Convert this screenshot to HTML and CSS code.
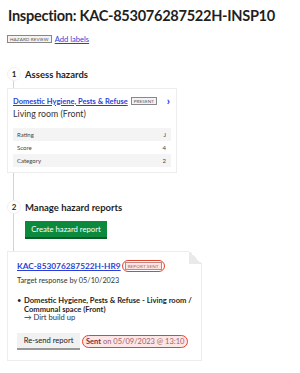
FILE: index.html
```html
<!DOCTYPE html>
<html lang="en">
<head>
    <meta charset="UTF-8">
    <meta name="viewport" content="width=device-width, initial-scale=1.0">
    <title>Inspection</title>
    <link rel="stylesheet" href="styles.css">
</head>
<body>
    <h1 class="title">Inspection: KAC-853076287522H-INSP10</h1>
    <div class="labels">
        <span class="tag">HAZARD REVIEW</span>
        <a href="#" class="link">Add labels</a>
    </div>

    <div class="steps">
        <div class="step">
            <div class="step-head">
                <span class="step-num">1</span>
                <h2>Assess hazards</h2>
            </div>
            <div class="card hazard-card">
                <div class="card-top">
                    <a href="#" class="card-link">Domestic Hygiene, Pests &amp; Refuse</a>
                    <span class="tag">PRESENT</span>
                    <span class="chevron">&rsaquo;</span>
                </div>
                <div class="location">Living room (Front)</div>
                <div class="stats">
                    <div class="stat-row shaded"><span>Rating</span><span>J</span></div>
                    <div class="stat-row"><span>Score</span><span>4</span></div>
                    <div class="stat-row shaded"><span>Category</span><span>2</span></div>
                </div>
            </div>
        </div>

        <div class="step">
            <div class="step-head">
                <span class="step-num">2</span>
                <h2>Manage hazard reports</h2>
            </div>
            <button class="create-btn">Create hazard report</button>
            <div class="card report-card">
                <span class="fold"></span>
                <div class="report-top">
                    <a href="#" class="report-link">KAC-853076287522H-HR9</a>
                    <span class="highlight"><span class="tag tag-sent">REPORT SENT</span></span>
                </div>
                <div class="target">Target response by 05/10/2023</div>
                <ul class="hazards">
                    <li>
                        <strong>Domestic Hygiene, Pests &amp; Refuse - Living room / Communal space (Front)</strong>
                        <div class="deficiency">&rarr; Dirt build up</div>
                    </li>
                </ul>
                <div class="report-actions">
                    <button class="resend-btn">Re-send report</button>
                    <span class="sent"><b>Sent</b> on 05/09/2023 @ 13:10</span>
                </div>
            </div>
        </div>
    </div>
</body>
</html>
```

FILE: styles.css
```css
* {
    margin: 0;
    padding: 0;
    box-sizing: border-box;
}

body {
    font-family: Lato, 'Noto Sans', sans-serif;
    color: #1f1f1f;
    background: white;
    padding: 6px 7px 0;
    font-size: 8px;
    overflow: hidden;
}

.title {
    font-size: 14.6px;
    font-weight: 700;
    line-height: 20px;
    letter-spacing: -0.3px;
    white-space: nowrap;
    padding-left: 1px;
}

.labels {
    display: flex;
    align-items: center;
    gap: 3px;
    margin-top: 8px;
    height: 9px;
}

.tag {
    display: inline-block;
    border: 1px solid #888;
    background: #f3f3f3;
    color: #555;
    font-size: 4.6px;
    line-height: 6px;
    padding: 0 2px;
    letter-spacing: 0.1px;
    white-space: nowrap;
}

.link {
    color: #2b3fd6;
    font-size: 7.6px;
}

.steps {
    margin-top: 24px;
    position: relative;
}

.steps::before {
    content: '';
    position: absolute;
    left: 6px;
    top: 10px;
    bottom: -40px;
    width: 1px;
    background: #d4d4d4;
}

.step {
    position: relative;
}

.step + .step {
    margin-top: 27px;
}

.step-head {
    display: flex;
    align-items: center;
    gap: 4px;
    height: 14px;
    margin-bottom: 7px;
}

.step-num {
    width: 14px;
    height: 14px;
    border-radius: 50%;
    background: white;
    border: 1px solid #f0f0f0;
    display: flex;
    align-items: center;
    justify-content: center;
    font-size: 8px;
    font-weight: 700;
    position: relative;
}

h2 {
    font-size: 9.5px;
    font-weight: 700;
}

.card {
    position: relative;
    background: white;
    border: 1px solid #ededed;
}

.hazard-card {
    width: 170px;
    padding: 7px 5px 5px;
}

.card-top {
    display: flex;
    align-items: center;
    gap: 3px;
    height: 10px;
}

.card-link {
    color: #2b3fd6;
    font-weight: 700;
    font-size: 7.5px;
}

.chevron {
    margin-left: auto;
    margin-right: 1px;
    color: #2b3fd6;
    font-weight: 900;
    font-size: 11px;
    line-height: 8px;
}

.location {
    margin-top: 3px;
    font-size: 8.8px;
    line-height: 10px;
    color: #333;
}

.stats {
    margin-top: 9px;
}

.stat-row {
    display: flex;
    justify-content: space-between;
    padding: 0 5px 0 4px;
    height: 13px;
    align-items: center;
    font-size: 6px;
    color: #444;
}

.stat-row.shaded {
    background: #f4f4f4;
}

.create-btn {
    margin-left: 18px;
    background: #0b8a3e;
    color: white;
    border: none;
    font-family: inherit;
    font-size: 7.7px;
    width: 82px;
    height: 18px;
    border-bottom: 2px solid #075c29;
}

.report-card {
    width: 195px;
    margin-top: 12px;
    padding: 8px 6px 10px 9px;
}

.fold {
    position: absolute;
    top: -1px;
    right: -1px;
    width: 13px;
    height: 13px;
    background: linear-gradient(225deg, white 50%, #eaeaea 50%);
}

.report-top {
    display: flex;
    align-items: center;
    gap: 1px;
    height: 12px;
}

.report-link {
    color: #2b3fd6;
    font-weight: 700;
    font-size: 8.3px;
}

.highlight {
    border: 1.5px solid #e8412c;
    border-radius: 8px;
    padding: 1px 2px;
    display: inline-flex;
}

.tag-sent {
    background: #fbe3e3;
    border-color: #b88;
    color: #a66;
}

.target {
    margin-top: 4px;
    font-size: 7.3px;
    line-height: 10px;
    color: #333;
}

.hazards {
    list-style: none;
    margin-top: 10px;
    font-size: 7.6px;
}

.hazards li {
    padding-left: 7px;
    position: relative;
    line-height: 8.5px;
}

.hazards li::before {
    content: '\2022';
    position: absolute;
    left: 0;
}

.deficiency {
    color: #333;
}

.report-actions {
    display: flex;
    align-items: center;
    gap: 2px;
    margin-top: 11px;
}

.resend-btn {
    background: #f1f1f1;
    border: none;
    border-bottom: 2px solid #999;
    font-family: inherit;
    font-size: 7.6px;
    color: #222;
    width: 63px;
    height: 17px;
}

.sent {
    border: 1.5px solid #e8412c;
    border-radius: 8px;
    background: #fde6e6;
    color: #a0616a;
    font-size: 7.5px;
    line-height: 11px;
    padding: 0 3px;
    white-space: nowrap;
}

.sent b {
    color: #7a2f3a;
}
```
